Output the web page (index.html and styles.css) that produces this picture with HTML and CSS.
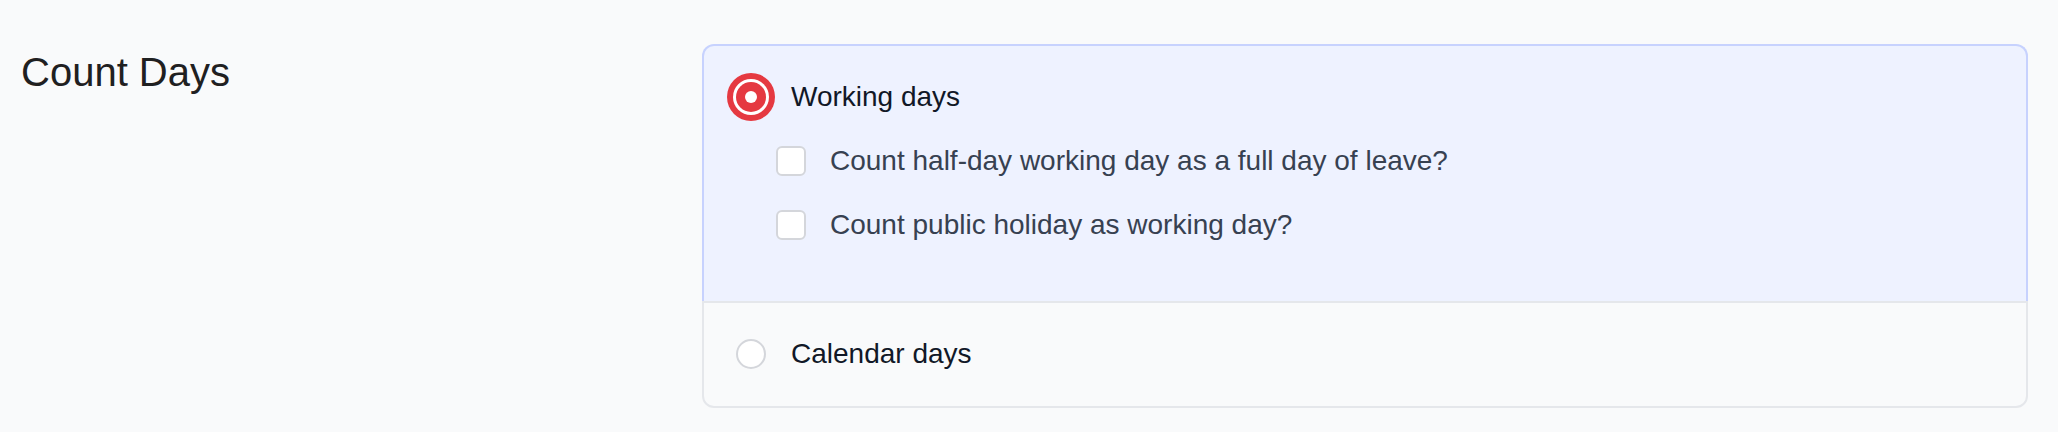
FILE: index.html
```html
<!DOCTYPE html>
<html lang="en">
<head>
<meta charset="utf-8">
<title>Count Days</title>
<link rel="stylesheet" href="styles.css">
</head>
<body>
<div class="setting">
  <h2 class="setting-title">Count Days</h2>
  <div class="choice-card">
    <div class="choice choice-active">
      <label class="option">
        <span class="radio radio-checked"><span class="radio-dot"></span></span>
        <span class="option-label">Working days</span>
      </label>
      <div class="sub-options">
        <label class="sub-option">
          <span class="checkbox"></span>
          <span class="sub-label">Count half-day working day as a full day of leave?</span>
        </label>
        <label class="sub-option">
          <span class="checkbox"></span>
          <span class="sub-label">Count public holiday as working day?</span>
        </label>
      </div>
    </div>
    <div class="choice choice-plain">
      <label class="option">
        <span class="radio"></span>
        <span class="option-label">Calendar days</span>
      </label>
    </div>
  </div>
</div>
</body>
</html>
```

FILE: styles.css
```css
* { box-sizing: border-box; }

html, body {
  margin: 0;
  padding: 0;
  background: #f9fafb;
  font-family: "Liberation Sans", Arial, Helvetica, sans-serif;
}

.setting {
  display: grid;
  grid-template-columns: 681px 1fr;
  padding: 44px 30px 0 21px;
}

.setting-title {
  margin: 0;
  font-size: 40px;
  font-weight: 400;
  line-height: 56px;
  color: #1f2021;
}

.choice-card {
  display: flex;
  flex-direction: column;
}

.choice {
  padding-left: 32px;
  padding-right: 32px;
}

.choice-active {
  background: #eef2ff;
  border: 2px solid #c7d2fe;
  border-bottom: none;
  border-radius: 12px 12px 0 0;
  padding-top: 27px;
  padding-bottom: 56px;
}

.choice-plain {
  background: #f9fafb;
  border: 2px solid #e5e7eb;
  border-radius: 0 0 12px 12px;
  padding-top: 27px;
  padding-bottom: 28px;
}

.option {
  display: flex;
  align-items: center;
  gap: 25px;
  height: 48px;
}

.option-label {
  font-size: 28px;
  color: #111827;
}

.radio {
  width: 30px;
  height: 30px;
  border-radius: 50%;
  border: 2px solid #d4d6db;
  background: #ffffff;
  flex: none;
  display: flex;
  align-items: center;
  justify-content: center;
}

.radio-checked {
  border: none;
  background: #e53941;
  box-shadow: 0 0 0 3px #ffffff, 0 0 0 9px #e53941;
}

.radio-dot {
  width: 12px;
  height: 12px;
  border-radius: 50%;
  background: #ffffff;
}

.sub-options {
  display: flex;
  flex-direction: column;
  gap: 24px;
  margin-top: 20px;
  margin-left: 40px;
}

.sub-option {
  display: flex;
  align-items: center;
  gap: 24px;
  height: 40px;
}

.checkbox {
  width: 30px;
  height: 30px;
  border: 2px solid #d4d6db;
  border-radius: 6px;
  background: #ffffff;
  flex: none;
}

.sub-label {
  font-size: 28px;
  color: #374151;
}
```
